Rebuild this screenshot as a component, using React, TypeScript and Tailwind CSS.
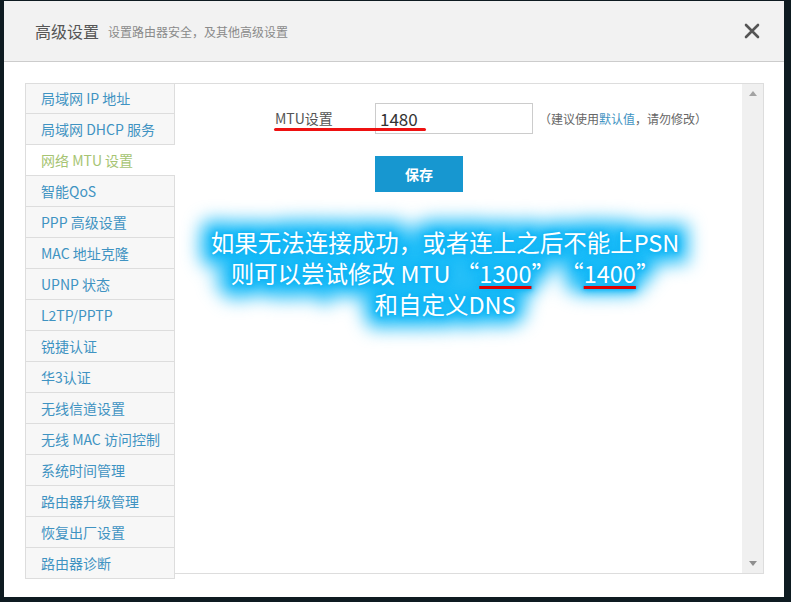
const menu = [
  "局域网 IP 地址",
  "局域网 DHCP 服务",
  "网络 MTU 设置",
  "智能QoS",
  "PPP 高级设置",
  "MAC 地址克隆",
  "UPNP 状态",
  "L2TP/PPTP",
  "锐捷认证",
  "华3认证",
  "无线信道设置",
  "无线 MAC 访问控制",
  "系统时间管理",
  "路由器升级管理",
  "恢复出厂设置",
  "路由器诊断",
];

const ACTIVE = 2;

function Note({ marks }: { marks: boolean }) {
  const u = marks
    ? "underline decoration-[#e00000] decoration-[3px] underline-offset-[3px]"
    : "";
  return (
    <>
      <div>如果无法连接成功，或者连上之后不能上PSN</div>
      <div>
        则可以尝试修改 MTU “<span className={u}>1300</span>” “<span className={u}>1400</span>”
      </div>
      <div>和自定义DNS</div>
    </>
  );
}

export default function App() {
  return (
    <div className="h-[602px] w-[791px] bg-[#0e1b21] pl-[4px] pr-[7px] pt-[1px] pb-[5px] font-['Noto_Sans_CJK_SC',sans-serif]">
      <div className="relative h-full bg-white">
        {/* header */}
        <div className="flex h-[61px] items-center border-b border-[#cccccc] bg-[#f2f2f2] pl-[31px] pr-[24px]">
          <span className="text-[16px] text-[#555]">高级设置</span>
          <span className="ml-[9px] mt-[2px] text-[12px] text-[#8a8a8a]">设置路由器安全，及其他高级设置</span>
          <svg className="ml-auto" width="16" height="16" viewBox="0 0 16 16">
            <path d="M2 2 L14 14 M14 2 L2 14" stroke="#555" strokeWidth="2.6" strokeLinecap="round" />
          </svg>
        </div>

        {/* body */}
        <div className="flex items-start pl-[21px] pr-[20px] pt-[21px]">
          {/* side menu */}
          <div className="w-[150px] shrink-0 border-t border-l border-[#dddddd]">
            {menu.map((m, i) => (
              <div
                key={m}
                className={
                  (i === 0 ? "h-[30px] " : "h-[31px] ") +
                  (i === ACTIVE
                    ? "flex items-center border-b border-[#dddddd] bg-white pl-[15px] text-[14px] text-[#a6c473]"
                    : "flex items-center border-b border-r border-[#dddddd] bg-[#f7f7f7] pl-[15px] text-[14px] text-[#3f93c2]")
                }
              >
                {m}
              </div>
            ))}
          </div>

          {/* panel */}
          <div className="flex h-[491px] flex-1 border-t border-r border-b border-[#dddddd]">
            <div className="flex-1 pl-[100px] pt-[19px]">
              <div className="relative flex items-center">
                <span className="w-[100px] text-[14px] text-[#555]">MTU设置</span>
                <div className="flex h-[31px] w-[158px] items-center border border-[#cccccc] pl-[4px] text-[17px] text-[#333]">
                  1480
                </div>
                <span className="ml-[6px] text-[12px] text-[#666]">
                  （建议使用<span className="text-[#3f93c2]">默认值</span>，请勿修改）
                </span>
                <div className="absolute left-[-1px] top-[25px] h-[3px] w-[152px] rounded-full bg-[#ee1111]" />
              </div>
              <button className="ml-[100px] mt-[22px] h-[36px] w-[88px] bg-[#1797d0] text-[14px] font-bold text-white">
                保存
              </button>
            </div>
            <div className="flex w-[21px] flex-col items-center justify-between bg-[#f0f0f0] py-[7px]">
              <svg width="8" height="5" viewBox="0 0 8 5">
                <path d="M0 5 L4 0 L8 5 Z" fill="#a3a3a3" />
              </svg>
              <svg width="8" height="5" viewBox="0 0 8 5">
                <path d="M0 0 L8 0 L4 5 Z" fill="#8f8f8f" />
              </svg>
            </div>
          </div>
        </div>

        {/* glowing note */}
        <div className="absolute left-[186px] top-[226px] w-[510px] text-center text-[23.5px] leading-[31px]">
          <div
            aria-hidden
            className="absolute inset-0 text-[#1cbcf8] blur-[9px] [-webkit-text-stroke:22px_#1cbcf8]"
          >
            <Note marks={false} />
          </div>
          <div className="relative text-white [text-shadow:0_0_2px_#12b4f4,0_0_4px_#12b4f4,0_0_7px_#12b4f4,0_0_10px_#12b4f4]">
            <Note marks />
          </div>
        </div>
      </div>
    </div>
  );
}
